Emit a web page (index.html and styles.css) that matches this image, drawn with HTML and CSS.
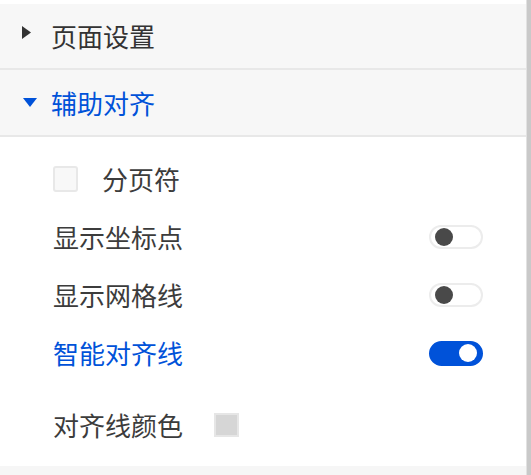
FILE: index.html
```html
<!DOCTYPE html>
<html lang="zh">
<head>
<meta charset="utf-8">
<link rel="stylesheet" href="styles.css">
</head>
<body>
<div class="frame">
  <div class="panel">
    <div class="top-gap"></div>
    <div class="section-head">
      <svg class="caret caret-right" width="9" height="13" viewBox="0 0 9 13"><polygon points="0,0 9,6.5 0,13" fill="#333"/></svg>
      <span class="head-title">页面设置</span>
    </div>
    <div class="section-head section-head-open">
      <svg class="caret caret-down" width="14" height="9" viewBox="0 0 14 9"><polygon points="0,0 14,0 7,9" fill="#0052d9"/></svg>
      <span class="head-title">辅助对齐</span>
    </div>
    <div class="section-body">
      <div class="row">
        <span class="checkbox"></span>
        <span class="label check-label">分页符</span>
      </div>
      <div class="row">
        <span class="label">显示坐标点</span>
        <span class="switch"><span class="knob"></span></span>
      </div>
      <div class="row">
        <span class="label">显示网格线</span>
        <span class="switch"><span class="knob"></span></span>
      </div>
      <div class="row">
        <span class="label label-active">智能对齐线</span>
        <span class="switch switch-on"><span class="knob"></span></span>
      </div>
      <div class="row row-color">
        <span class="label">对齐线颜色</span>
        <span class="swatch"></span>
      </div>
    </div>
    <div class="bottom-strip"></div>
  </div>
  <div class="scroll-edge"></div>
</div>
</body>
</html>
```
FILE: styles.css
```css
html, body {
  margin: 0;
  padding: 0;
  background: #ffffff;
}
body {
  font-family: "Noto Sans CJK SC", "Noto Sans", sans-serif;
  color: #333333;
}
.frame {
  display: flex;
  width: 531px;
  height: 475px;
  overflow: hidden;
}
.panel {
  width: 526px;
  display: flex;
  flex-direction: column;
  background: #ffffff;
}
.scroll-edge {
  width: 5px;
  border-left: 1px solid #e2e2e2;
  background: #c9c9c9;
  box-sizing: border-box;
}
.top-gap {
  height: 4px;
  background: #ffffff;
}
.section-head {
  height: 64px;
  background: #f7f7f7;
  border-bottom: 2px solid #e8e8e8;
  display: flex;
  align-items: center;
  padding-left: 22px;
}
.section-head-open {
  height: 65px;
}
.caret {
  display: block;
  flex: none;
}
.caret-right {
  margin-bottom: 7px;
  margin-right: 20px;
}
.caret-down {
  margin-left: 1px;
  margin-right: 14px;
}
.head-title {
  font-size: 26px;
  line-height: 30px;
  color: #333333;
}
.section-head-open .head-title {
  color: #0052d9;
}
.section-body {
  flex: 1;
  padding: 13px 43px 0 53px;
}
.row {
  height: 58px;
  display: flex;
  align-items: center;
  justify-content: space-between;
}
.row:first-child {
  justify-content: flex-start;
}
.row-color {
  margin-top: 14px;
  justify-content: flex-start;
}
.label {
  font-size: 26px;
  line-height: 30px;
  color: #3c3c3c;
}
.label-active {
  color: #0052d9;
}
.checkbox {
  width: 25px;
  height: 26px;
  box-sizing: border-box;
  border: 2px solid #e8e8e8;
  border-radius: 3px;
  background: #f8f8f8;
}
.check-label {
  margin-left: 24px;
}
.switch {
  position: relative;
  width: 54px;
  height: 24px;
  box-sizing: border-box;
  border: 2px solid #ececec;
  border-radius: 12px;
  background: #ffffff;
}
.switch .knob {
  position: absolute;
  top: 1px;
  left: 4px;
  width: 18px;
  height: 18px;
  border-radius: 50%;
  background: #494949;
}
.switch-on {
  height: 25px;
  border-color: #0052d9;
  background: #0052d9;
  border-radius: 13px;
}
.switch-on .knob {
  left: 28px;
  top: 1.5px;
  background: #ffffff;
}
.swatch {
  margin-left: 31px;
  width: 25px;
  height: 24px;
  box-sizing: border-box;
  border: 2px solid #e6e6e6;
  background: #d6d6d6;
}
.bottom-strip {
  height: 9px;
  background: #f6f6f6;
}
```
